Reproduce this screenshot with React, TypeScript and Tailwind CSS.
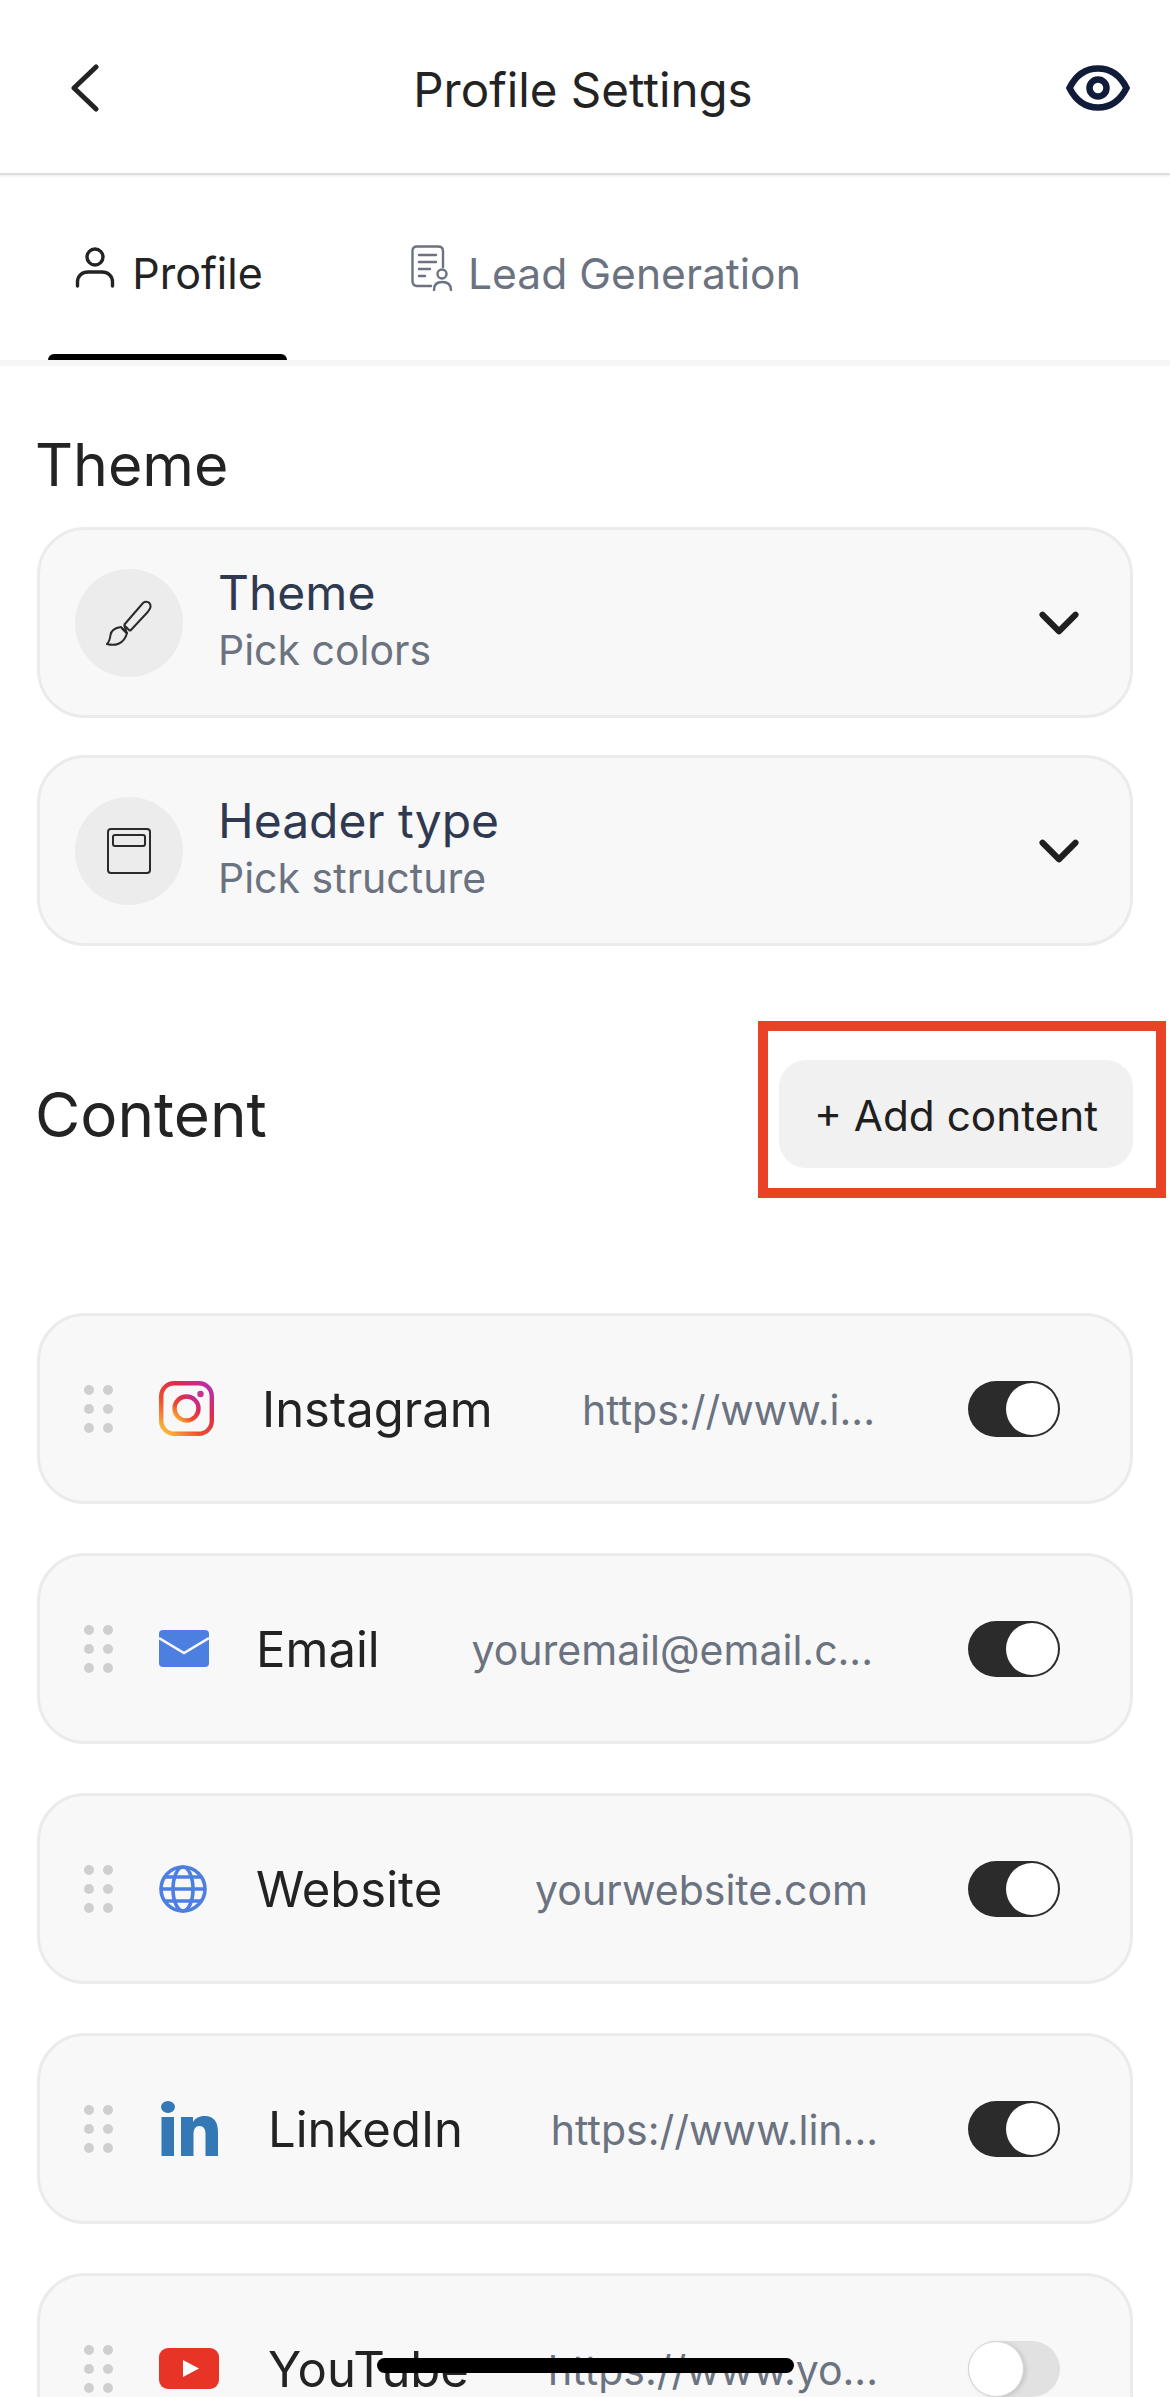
import { ChevronDown } from 'lucide-react';
import type { ReactNode } from 'react';

const InstagramIcon = () => (
  <svg viewBox="0 0 55 55" className="h-[55px] w-[55px]" fill="none">
    <defs>
      <linearGradient id="ig" x1="0.05" y1="1" x2="0.95" y2="0">
        <stop offset="0" stopColor="#fdc23c" />
        <stop offset="0.35" stopColor="#ee4d2e" />
        <stop offset="0.7" stopColor="#dd2a4f" />
        <stop offset="1" stopColor="#b32fb5" />
      </linearGradient>
    </defs>
    <rect x="2.2" y="2.2" width="50.6" height="50.6" rx="13" stroke="url(#ig)" strokeWidth="4.4" />
    <circle cx="27.5" cy="27.5" r="12" stroke="url(#ig)" strokeWidth="4.4" />
    <circle cx="41.5" cy="13" r="3.2" fill="#c9308f" />
  </svg>
);

const EmailIcon = () => (
  <svg viewBox="0 0 50 37" className="h-[37px] w-[50px]">
    <rect width="50" height="37" rx="4" fill="#4d7fe0" />
    <path d="M0 8 L25 23 L50 8" fill="none" stroke="#f8f8f9" strokeWidth="2.6" />
  </svg>
);

const GlobeIcon = () => (
  <svg viewBox="0 0 48 48" className="h-[48px] w-[48px]" fill="none" stroke="#4d7fe0" strokeWidth="3.6">
    <circle cx="24" cy="24" r="22" />
    <ellipse cx="24" cy="24" rx="10" ry="22" />
    <path d="M2 24 H46 M6 12 H42 M6 36 H42" />
  </svg>
);

const LinkedInIcon = () => (
  <svg viewBox="0 0 57 55" className="ml-[2px] h-[55px] w-[57px]" fill="#3478b5">
    <ellipse cx="7" cy="6" rx="7" ry="6" />
    <rect x="0.5" y="16" width="12.5" height="39" />
    <path d="M20 16 H32 V21 C34 17.5 38 15 43.5 15 C53 15 57 21 57 31 V55 H44.5 V33 C44.5 28 42.5 25 38.5 25 C34.5 25 32.5 28 32.5 33 V55 H20 Z" />
  </svg>
);

const YouTubeIcon = () => (
  <svg viewBox="0 0 60 41" className="h-[41px] w-[60px]">
    <rect width="60" height="41" rx="9" fill="#e83427" />
    <path d="M24 12 L40 20.5 L24 29 Z" fill="#fff" />
  </svg>
);

const BrushIcon = () => (
  <svg viewBox="0 0 46 46" className="h-[46px] w-[46px]" fill="none" stroke="#2a2a2a" strokeWidth="2">
    <path d="M18 25 L37 3 C40 0.5 45 2 44.5 7 C44 10 41 13 38 16 L24 31" />
    <path d="M18 25 L24 31 M15.5 28 L21 33.5 L18 25" />
    <path d="M15 27 C8 28 5 31 4.5 35 C4 39 3 42 1 44 C8 46 18 45 21 33 Z" />
  </svg>
);

const HeaderIcon = () => (
  <svg viewBox="0 0 44 46" className="h-[46px] w-[44px]" fill="none" stroke="#2a2a2a" strokeWidth="2">
    <rect x="1" y="1" width="42" height="44" rx="3" />
    <rect x="6" y="7" width="32" height="11" rx="2" />
  </svg>
);

const PersonIcon = () => (
  <svg viewBox="0 0 40 41" className="h-[41px] w-[40px]" fill="none" stroke="#232323" strokeWidth="3.4" strokeLinecap="round">
    <circle cx="20" cy="10" r="8" />
    <path d="M2.5 39 V35 C2.5 29 7 25 13 25 H27 C33 25 37.5 29 37.5 35 V39" />
  </svg>
);

const LeadIcon = () => (
  <svg viewBox="0 0 42 46" className="h-[46px] w-[42px]" fill="none" stroke="#6b7280" strokeWidth="2.4" strokeLinecap="round">
    <path d="M20 41 H6 C3 41 1.5 39 1.5 36 V6 C1.5 3 3 1.5 6 1.5 H27 C30 1.5 32 3 32 6 V22" />
    <path d="M8 10 H25 M8 17 H25 M8 24 H19 M8 31 H14" />
    <circle cx="31" cy="29" r="4.5" />
    <path d="M23 45 C23 39 26 37 31 37 C36 37 40 39 40 45" />
  </svg>
);

const DragDots = () => (
  <div className="grid h-[48px] w-[29px] shrink-0 grid-cols-[10px_10px] content-between justify-between">
    {[0, 1, 2, 3, 4, 5].map((n) => (
      <span key={n} className="h-[10px] w-[10px] rounded-full bg-[#cfcfcf]" />
    ))}
  </div>
);

const Toggle = ({ on }: { on: boolean }) =>
  on ? (
    <div className="flex h-[56px] w-[92px] shrink-0 items-center justify-end rounded-full bg-[#2b2b2b] pr-[2px]">
      <span className="h-[52px] w-[52px] rounded-full bg-white" />
    </div>
  ) : (
    <div className="flex h-[56px] w-[92px] shrink-0 items-center rounded-full bg-[#e1e1e1]">
      <span className="h-[56px] w-[56px] rounded-full border border-[#d4d4d4] bg-white shadow-[2px_1px_4px_rgba(0,0,0,0.12)]" />
    </div>
  );

type Row = {
  label: string;
  url: string;
  icon: ReactNode;
  iconBox: string;
  urlGap: string;
  on: boolean;
};

const rows: Row[] = [
  { label: 'Instagram', url: 'https://www.i...', icon: <InstagramIcon />, iconBox: 'w-[103px]', urlGap: 'mr-[93px]', on: true },
  { label: 'Email', url: 'youremail@email.c...', icon: <EmailIcon />, iconBox: 'w-[97px]', urlGap: 'mr-[95px]', on: true },
  { label: 'Website', url: 'yourwebsite.com', icon: <GlobeIcon />, iconBox: 'w-[97px]', urlGap: 'mr-[100px]', on: true },
  { label: 'LinkedIn', url: 'https://www.lin...', icon: <LinkedInIcon />, iconBox: 'w-[109px]', urlGap: 'mr-[90px]', on: true },
  { label: 'YouTube', url: 'https://www.yo...', icon: <YouTubeIcon />, iconBox: 'w-[109px]', urlGap: 'mr-[90px]', on: false },
];

const PickerCard = ({ icon, title, sub }: { icon: ReactNode; title: string; sub: string }) => (
  <div className="flex h-[191px] items-center rounded-[48px] border-[3px] border-[#ebebeb] bg-[#f8f8f9] pl-[35px] pr-[38px]">
    <div className="flex h-[108px] w-[108px] shrink-0 items-center justify-center rounded-full bg-[#ececec]">{icon}</div>
    <div className="ml-[35px] flex-1 pb-[3px]">
      <div className="text-[48px] leading-[58px] text-[#2f3950]">{title}</div>
      <div className="text-[41px] leading-[56px] text-[#6b7280]">{sub}</div>
    </div>
    <ChevronDown className="h-[66px] w-[66px] text-[#1f1f1f]" strokeWidth={2.2} />
  </div>
);

export default function App() {
  return (
    <div className="relative h-[2397px] w-[1170px] overflow-hidden bg-white font-['Inter',sans-serif]">
      <header className="flex h-[175px] items-center justify-between border-b-2 border-[#dedede] pl-[70px] pr-[40px] pt-[3px] shadow-[0_1px_2px_rgba(0,0,0,0.08)]">
        <svg viewBox="0 0 30 48" className="h-[48px] w-[30px]" fill="none" stroke="#232323" strokeWidth="5" strokeLinecap="round" strokeLinejoin="round">
          <path d="M26 3 L4 24 L26 45" />
        </svg>
        <h1 className="pt-[4px] text-[47.5px] font-normal text-[#232323]">Profile Settings</h1>
        <svg viewBox="0 0 64 46" className="h-[46px] w-[64px]" fill="none" stroke="#101c3a" strokeWidth="6.5">
          <path d="M3.5 23 C10 10 20 3.5 32 3.5 C44 3.5 54 10 60.5 23 C54 36 44 42.5 32 42.5 C20 42.5 10 36 3.5 23 Z" />
          <circle cx="32" cy="23" r="8.5" />
        </svg>
      </header>

      <nav className="flex h-[191px] border-b-[6px] border-[#f6f6f6]">
        <div className="relative ml-[48px] flex w-[239px] items-center justify-center gap-[17px] pl-[3px]">
          <PersonIcon />
          <span className="pt-[12px] text-[43px] text-[#232323]">Profile</span>
          <span className="absolute bottom-0 left-0 h-[6px] w-full rounded-t-[6px] bg-black" />
        </div>
        <div className="ml-[124px] flex items-center gap-[15px]">
          <LeadIcon />
          <span className="pt-[12px] text-[42.6px] text-[#6b7280]">Lead Generation</span>
        </div>
      </nav>

      <main className="px-[37px]">
        <h2 className="-ml-[2px] mt-[66px] text-[59px] font-normal leading-[66px] text-[#232323]">Theme</h2>
        <div className="mt-[29px] flex flex-col gap-[37px]">
          <PickerCard icon={<BrushIcon />} title="Theme" sub="Pick colors" />
          <PickerCard icon={<HeaderIcon />} title="Header type" sub="Pick structure" />
        </div>

        <div className="mt-[114px] flex items-center justify-between">
          <h2 className="-ml-[2px] text-[62px] font-normal text-[#232323]">Content</h2>
          <button className="relative h-[108px] w-[354px] rounded-[27px] bg-[#f1f1f1] pt-[3px] text-[42.3px] text-[#1f1f1f]">
            + Add content
            <span className="absolute bottom-[-30px] left-[-21px] right-[-33px] top-[-39px] border-[10px] border-[#ea4227]" />
          </button>
        </div>

        <div className="mt-[145px] flex flex-col gap-[49px]">
          {rows.map((row) => (
            <div
              key={row.label}
              className="flex h-[191px] items-center rounded-[48px] border-[3px] border-[#ebebeb] bg-[#f8f8f9] pl-[44px]"
            >
              <DragDots />
              <div className={`ml-[46px] flex shrink-0 items-center ${row.iconBox}`}>{row.icon}</div>
              <div className="shrink-0 pt-[2px] text-[49px] text-[#232323]">{row.label}</div>
              <div className="ml-auto mr-[70px] flex items-center">
                <span className={`truncate pt-[5px] text-right text-[41px] text-[#6b7280] ${row.urlGap}`}>{row.url}</span>
                <Toggle on={row.on} />
              </div>
            </div>
          ))}
        </div>
      </main>

      <div className="absolute bottom-[24px] left-[377px] h-[15px] w-[417px] rounded-full bg-black" />
    </div>
  );
}
